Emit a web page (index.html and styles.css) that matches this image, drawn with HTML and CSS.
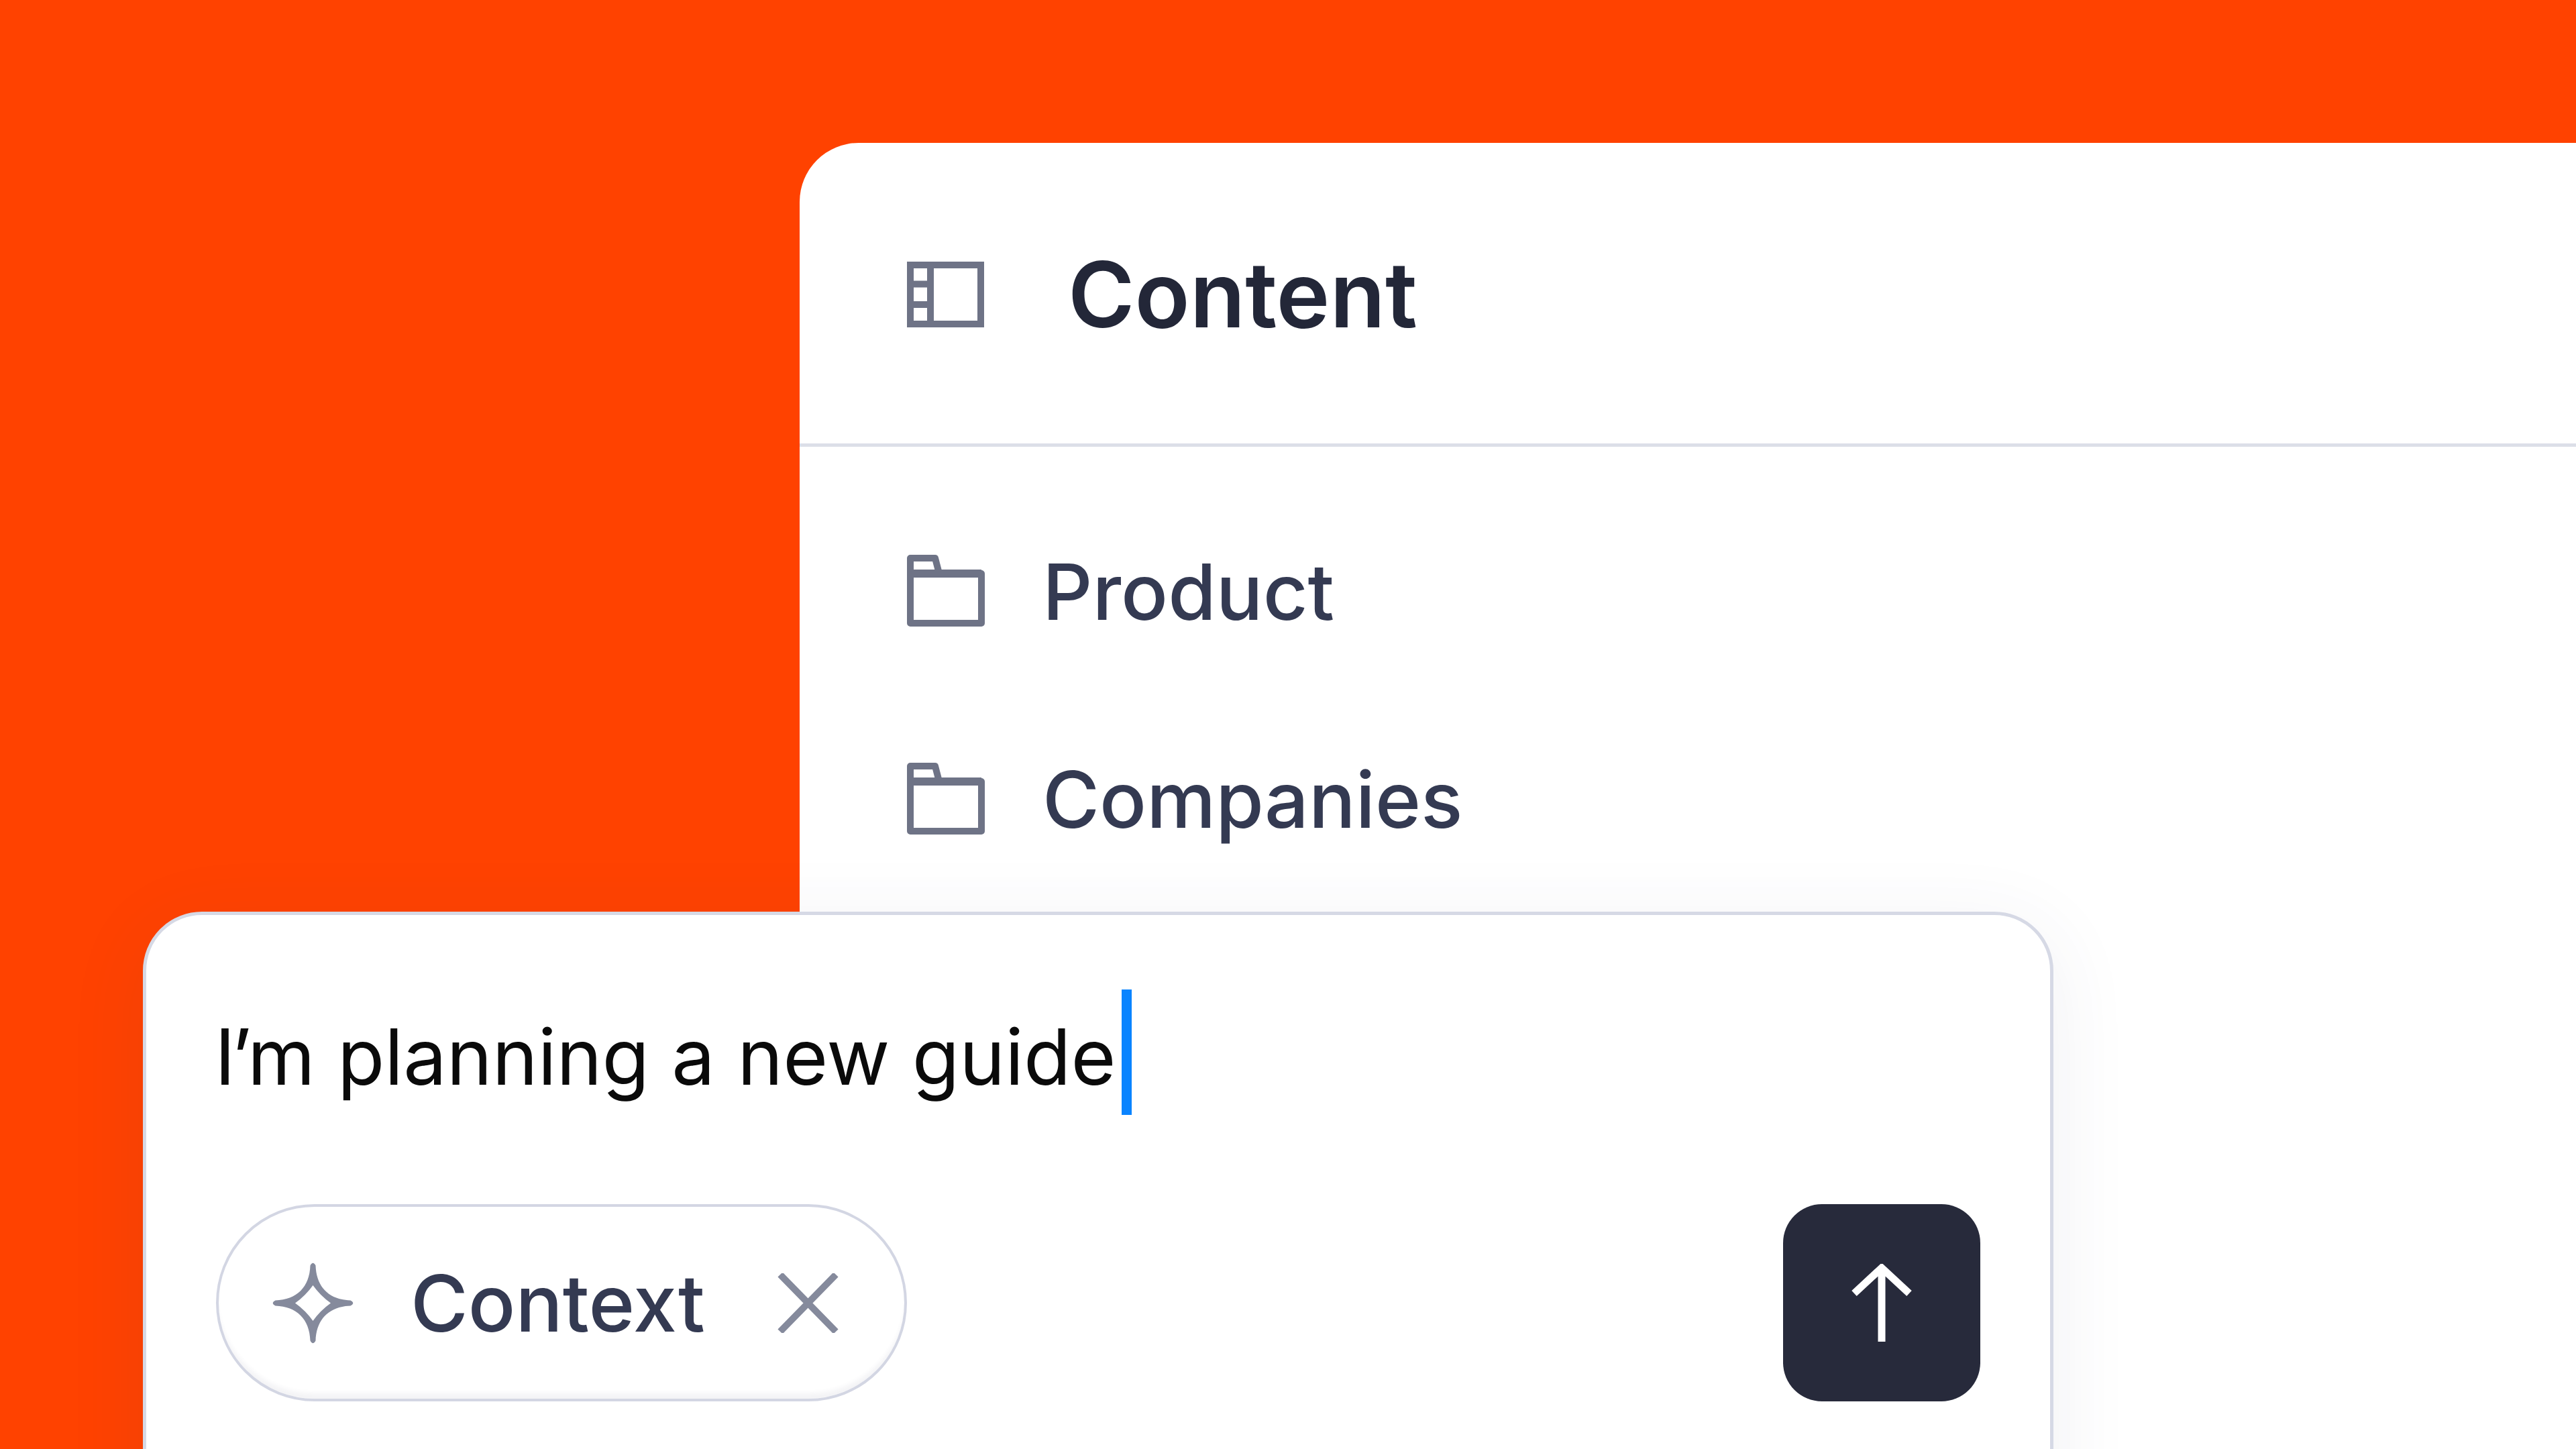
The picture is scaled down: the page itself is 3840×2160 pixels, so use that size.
FILE: index.html
```html
<!DOCTYPE html>
<html lang="en">
  <head>
    <meta charset="UTF-8" />
    <title>Content</title>
    <link rel="stylesheet" href="styles.css">
  </head>
  <body>
    <main class="stage">
      <section class="panel">
        <header class="panel-head">
          <svg class="icon-sidebar" viewBox="0 0 115 98" fill="none" stroke="currentColor" stroke-width="10">
            <rect x="5" y="5" width="105" height="88"></rect>
            <path d="M35 5V93M5 33.5H35M5 64H35"></path>
          </svg>
          <h1>Content</h1>
        </header>
        <ul class="tree">
          <li class="tree-item">
            <svg class="icon-folder" viewBox="0 0 116 108" fill="none" stroke="currentColor" stroke-width="10" stroke-linejoin="round">
              <path d="M5 103V6H42L48 29H111V103Z"></path>
              <path d="M5 29H111" stroke-width="12"></path>
            </svg>
            <span class="tree-label">Product</span>
          </li>
          <li class="tree-item">
            <svg class="icon-folder" viewBox="0 0 116 108" fill="none" stroke="currentColor" stroke-width="10" stroke-linejoin="round">
              <path d="M5 103V6H42L48 29H111V103Z"></path>
              <path d="M5 29H111" stroke-width="12"></path>
            </svg>
            <span class="tree-label">Companies</span>
          </li>
        </ul>
      </section>

      <section class="prompt">
        <div class="prompt-input">
          <span class="prompt-text"><span class="apostrophe">I’</span>m planning a new guide</span>
          <span class="caret"></span>
        </div>
        <div class="prompt-actions">
          <div class="chip">
            <svg class="icon-spark" viewBox="0 0 123 125" fill="currentColor">
              <path fill-rule="evenodd" d="M57.5 6.5Q61.5 -1 65.5 6.5C66.5 38.5 85.5 57.5 117.5 58.5Q125 62.5 117.5 66.5C85.5 67.5 66.5 86.5 65.5 118.5Q61.5 126 57.5 118.5C56.5 86.5 37.5 67.5 5.5 66.5Q-2 62.5 5.5 58.5C37.5 57.5 56.5 38.5 57.5 6.5ZM61.5 36Q72.5 51.5 88 62.5Q72.5 73.5 61.5 89Q50.5 73.5 35 62.5Q50.5 51.5 61.5 36Z"></path>
            </svg>
            <span class="chip-label">Context</span>
            <svg class="icon-close" viewBox="0 0 91 89" fill="none" stroke="currentColor" stroke-width="10">
              <path d="M4 2L87 87M87 2L4 87"></path>
            </svg>
          </div>
          <button class="send-button">
            <svg class="icon-arrow" viewBox="0 0 90 116" fill="none" stroke="currentColor" stroke-width="11">
              <path d="M45 116V6M4 44L45 6L86 44"></path>
            </svg>
          </button>
        </div>
      </section>
    </main>
  </body>
</html>
```

FILE: styles.css
```css
* {
  box-sizing: border-box;
  margin: 0;
  padding: 0;
}
body {
  font-family: "Inter", "Liberation Sans", sans-serif;
  background: #ff4200;
}
.stage {
  position: relative;
  width: 3840px;
  height: 2160px;
  overflow: hidden;
  padding: 213px 0 0 1192px;
}

/* content panel */
.panel {
  height: 2000px;
  background: #ffffff;
  border-top-left-radius: 88px;
}
.panel-head {
  height: 453px;
  padding: 4px 0 0 160px;
  display: flex;
  align-items: center;
  gap: 125px;
  border-bottom: 5px solid #dcdfe8;
  color: #232738;
}
.panel-head h1 {
  font-size: 135px;
  font-weight: 600;
  line-height: 1;
}
.icon-sidebar {
  width: 115px;
  height: 98px;
  color: #6e7386;
}
.tree {
  list-style: none;
  padding: 160px 0 0 160px;
  display: flex;
  flex-direction: column;
  gap: 202px;
}
.tree-item {
  height: 108px;
  display: flex;
  align-items: center;
  gap: 86px;
  font-size: 116px;
  font-weight: 500;
  color: #343a52;
}
.tree-label {
  padding-top: 4px;
}
.icon-folder {
  width: 116px;
  height: 108px;
  color: #6e7386;
}

/* prompt box */
.prompt {
  position: absolute;
  left: 213px;
  top: 1359px;
  width: 2848px;
  height: 1000px;
  padding: 111px 104px 0;
  background: #ffffff;
  border: 5px solid #d6d9e5;
  border-radius: 88px;
  box-shadow: 0 24px 120px rgba(60, 65, 100, 0.08);
}
.prompt-input {
  height: 187px;
  display: flex;
  align-items: center;
  gap: 9px;
  font-size: 115px;
  word-spacing: 1px;
  color: #0a0a0a;
}
.prompt-text {
  margin-left: -2px;
  padding-top: 14px;
  white-space: nowrap;
}
.apostrophe {
  letter-spacing: -6px;
}
.caret {
  width: 15px;
  height: 187px;
  background: #0a84ff;
}
.prompt-actions {
  margin-top: 133px;
  display: flex;
  justify-content: space-between;
  align-items: center;
}
.chip {
  height: 294px;
  width: 1030px;
  padding: 0 98px 0 79px;
  display: flex;
  align-items: center;
  border: 4px solid #d3d6e3;
  border-radius: 147px;
  box-shadow: inset 0 -11px 6px -3px rgba(60, 65, 100, 0.06);
}
.chip-label {
  margin-left: 84px;
  font-size: 117px;
  font-weight: 500;
  color: #343a52;
}
.icon-spark {
  width: 123px;
  height: 125px;
  color: #858a9c;
}
.icon-close {
  width: 91px;
  height: 89px;
  margin-left: auto;
  color: #858a9c;
}
.send-button {
  width: 294px;
  height: 294px;
  border: none;
  border-radius: 58px;
  background: #272a3b;
  color: #ffffff;
  display: flex;
  align-items: center;
  justify-content: center;
}
.icon-arrow {
  width: 90px;
  height: 116px;
}
```
